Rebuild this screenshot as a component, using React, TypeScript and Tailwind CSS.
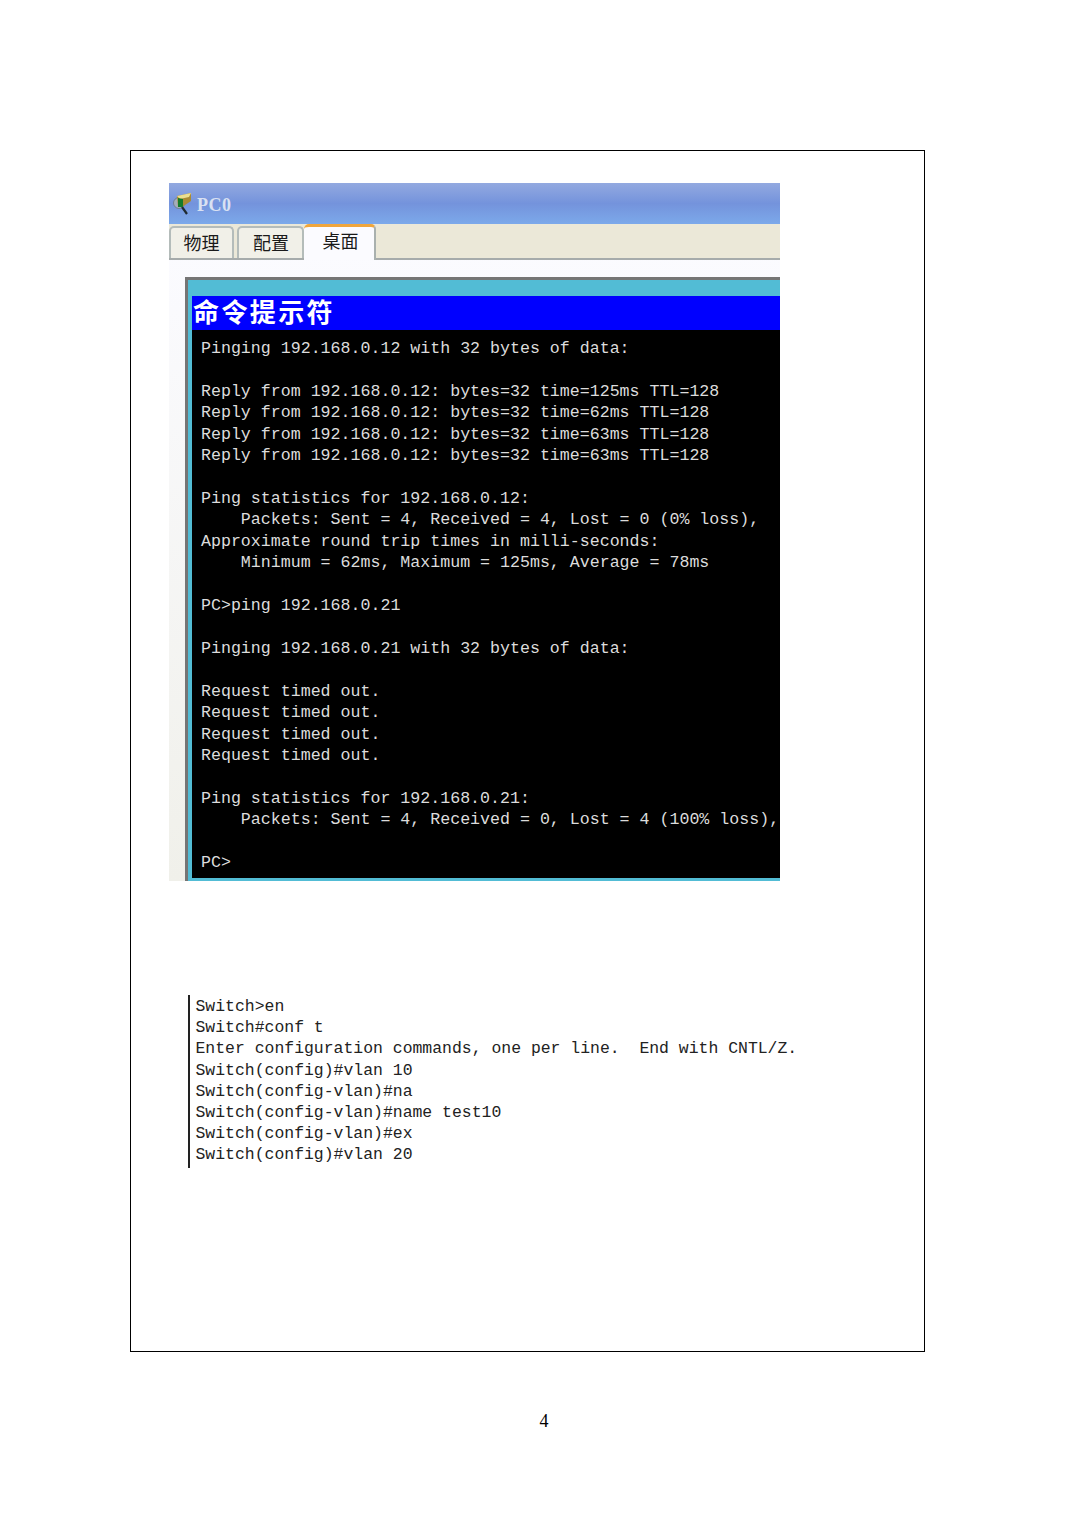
const ping = `Pinging 192.168.0.12 with 32 bytes of data:

Reply from 192.168.0.12: bytes=32 time=125ms TTL=128
Reply from 192.168.0.12: bytes=32 time=62ms TTL=128
Reply from 192.168.0.12: bytes=32 time=63ms TTL=128
Reply from 192.168.0.12: bytes=32 time=63ms TTL=128

Ping statistics for 192.168.0.12:
    Packets: Sent = 4, Received = 4, Lost = 0 (0% loss),
Approximate round trip times in milli-seconds:
    Minimum = 62ms, Maximum = 125ms, Average = 78ms

PC>ping 192.168.0.21

Pinging 192.168.0.21 with 32 bytes of data:

Request timed out.
Request timed out.
Request timed out.
Request timed out.

Ping statistics for 192.168.0.21:
    Packets: Sent = 4, Received = 0, Lost = 4 (100% loss),

PC>`;

const sw = `Switch>en
Switch#conf t
Enter configuration commands, one per line.  End with CNTL/Z.
Switch(config)#vlan 10
Switch(config-vlan)#na
Switch(config-vlan)#name test10
Switch(config-vlan)#ex
Switch(config)#vlan 20`;

const cjk = "font-['Noto_Sans_CJK_SC','Liberation_Sans',sans-serif]";

function PcIcon() {
  return (
    <svg width="20" height="24" viewBox="0 0 20 24" className="ml-[4px] mb-[2px] shrink-0">
      <circle cx="6" cy="12" r="5.5" fill="#a4aebb" stroke="#6f7f94" strokeWidth="1" />
      <path d="M9 16l5 7" stroke="#1f2a30" strokeWidth="2.2" />
      <path d="M4 5l14-3v8L9 16H5z" fill="#a98a34" />
      <path d="M4 5l14-3-2 4-9 2z" fill="#ecdf90" />
      <path d="M5 7l5 1v8H5z" fill="#147a2a" />
    </svg>
  );
}

export default function App() {
  return (
    <div className="w-[1087px] h-[1536px] bg-white pt-[150px] pl-[130px]">
      <div className="w-[795px] h-[1202px] border border-black pt-[32px] pl-[38px]">
        <div className="w-[611px] h-[698px] flex flex-col overflow-hidden bg-gradient-to-b from-[#fbfbff] from-[10%] to-[#f0f0ea]">
          <div className="h-[41px] shrink-0 flex items-center bg-gradient-to-b from-[#93a9e0] via-[#7493dc] to-[#7ca9ea]">
            <PcIcon />
            <span className="ml-[4px] mt-[4px] font-['Liberation_Serif',serif] font-bold text-[18px] tracking-[0.5px] text-[#d9e1f2]">PC0</span>
          </div>
          <div className={`h-[36px] shrink-0 flex items-end bg-[#ebe8d8] border-b-2 border-[#a6abab] ${cjk}`}>
            <div className="w-[65px] h-[32px] pb-[2px] flex items-center justify-center rounded-t-[5px] border-2 border-b-0 border-[#b4bcba] bg-[#f1f0e8] text-[18px] text-[#1a1a1a]">物理</div>
            <div className="ml-[3px] w-[67px] h-[32px] pb-[2px] pl-[1px] flex items-center justify-center rounded-t-[5px] border-2 border-b-0 border-[#b4bcba] bg-[#f1f0e8] text-[18px] text-[#1a1a1a]">配置</div>
            <div className="w-[72px] h-[36px] -mb-[2px] pb-[6px] pl-[3px] flex items-center justify-center rounded-t-[5px] border-t-[3px] border-t-[#f0a63c] border-r-2 border-r-[#a9b0ae] bg-[#fbfbff] text-[18px] text-[#1a1a1a]">桌面</div>
          </div>
          <div className="flex-1 min-h-0 pt-[17px] pl-[16px] flex flex-col">
            <div className="flex-1 min-h-0 border-l-[3px] border-t-[3px] border-[#757575] bg-[#52bcd5] pt-[16px] pl-[4px] pb-[3px] flex flex-col">
              <div className={`h-[34px] shrink-0 bg-[#0000ff] pl-[1px] pb-[4px] flex items-center text-[26px] leading-none font-bold tracking-[2.4px] whitespace-nowrap text-white ${cjk}`}>命令提示符</div>
              <pre className="flex-1 min-h-0 overflow-hidden bg-black pt-[8px] pl-[9px] font-['Liberation_Mono',monospace] text-[16.63px] leading-[21.42px] text-[#dcdcdc] whitespace-pre">{ping}</pre>
            </div>
          </div>
        </div>
        <pre className="mt-[114px] ml-[19px] w-fit h-[173px] border-l-2 border-[#222] pt-[1px] pl-[5.5px] font-['Liberation_Mono',monospace] text-[16.45px] leading-[21.2px] text-[#222] whitespace-pre">{sw}</pre>
      </div>
      <div className="w-[828px] mt-[58px] text-center font-['Liberation_Serif',serif] text-[18px] leading-[22px] text-black">4</div>
    </div>
  );
}
